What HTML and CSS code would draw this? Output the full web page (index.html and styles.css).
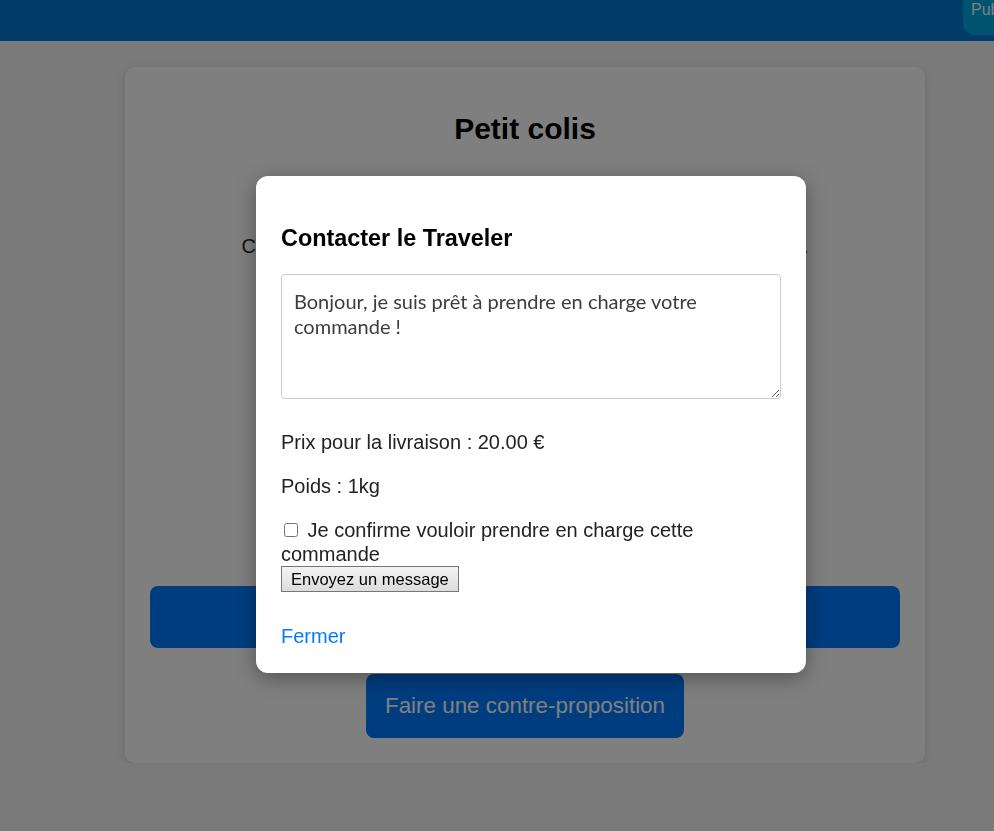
FILE: index.html
```html
<!DOCTYPE html>
<html lang="fr">
<head>
<meta charset="utf-8">
<title>Petit colis</title>
<link rel="stylesheet" href="styles.css">
</head>
<body>
<header class="topbar">
  <button class="publish">Publier</button>
</header>
<main class="page">
  <section class="card">
    <h2 class="card-title">Petit colis</h2>
    <p class="meta">Publié par Marie</p>
    <p class="summary"><span class="summary-text">Colis à récupérer à Paris et à livrer à Lyon avant le 25 juin.</span></p>
    <div class="details">
      <p>Départ : Paris</p>
      <p>Arrivée : Lyon</p>
      <p>Poids : 1kg</p>
      <p>Prix : 20.00 €</p>
      <p>Date : 25/06</p>
      <p>Taille : petite</p>
      <p>Statut : ouvert</p>
    </div>
    <button class="btn btn-wide">Accepter la commande</button>
    <button class="btn btn-counter">Faire une contre-proposition</button>
  </section>
</main>
<div class="overlay"></div>
<div class="modal">
  <h3 class="modal-title">Contacter le Traveler</h3>
  <textarea class="message">Bonjour, je suis prêt à prendre en charge votre commande !</textarea>
  <p class="info">Prix pour la livraison : 20.00 €</p>
  <p class="info">Poids : 1kg</p>
  <div class="confirm">
    <label class="confirm-label"><input type="checkbox" class="confirm-box"> Je confirme vouloir prendre en charge cette commande</label>
    <button class="send">Envoyez un message</button>
  </div>
  <a class="close" href="#">Fermer</a>
</div>
</body>
</html>
```
FILE: styles.css
```css
body {
  margin: 0;
  background: #f4f4f4;
  font-family: "Liberation Sans", Arial, sans-serif;
  font-size: 20px;
  color: #000;
  overflow: hidden;
}

.topbar {
  height: 41px;
  background: #0078d4;
  display: flex;
  justify-content: flex-end;
  align-items: flex-start;
}

.publish {
  width: 100px;
  margin: -11px -69px 0 0;
  padding: 12px 8px 16px;
  border: none;
  border-radius: 12px;
  background: #00a8e0;
  color: #fff;
  font-family: "Liberation Sans", Arial, sans-serif;
  font-size: 16px;
  line-height: 18px;
  text-align: left;
}

.page {
  padding: 26px 0 0 125px;
}

.card {
  width: 800px;
  box-sizing: border-box;
  padding: 45px 25px 25px;
  background: #fff;
  border-radius: 10px;
  box-shadow: 0 2px 10px rgba(0, 0, 0, 0.12);
  text-align: center;
  line-height: 23px;
}

.card-title {
  margin: 0 0 46px;
  font-size: 30px;
  line-height: 34px;
  font-weight: bold;
}

.meta {
  margin: 0;
  color: #555;
}

.summary {
  margin: 20px 0;
}

.summary-text {
  display: inline-block;
  width: 567px;
  text-align: justify;
  text-align-last: justify;
  color: #222;
}

.details {
  display: flex;
  flex-direction: column;
  gap: 20px;
  margin: 20px 0 27px;
}

.details p {
  margin: 0;
}

.btn {
  display: block;
  border: none;
  border-radius: 8px;
  background: #007bff;
  color: #fff;
  font-family: "Liberation Sans", Arial, sans-serif;
}

.btn-wide {
  width: 100%;
  height: 62px;
  font-size: 22px;
}

.btn-counter {
  margin: 26px auto 0;
  height: 64px;
  padding: 0 19px;
  font-size: 22.4px;
}

.overlay {
  position: fixed;
  inset: 0;
  background: rgba(0, 0, 0, 0.5);
}

.modal {
  position: absolute;
  top: 176px;
  left: 256px;
  width: 550px;
  box-sizing: border-box;
  padding: 25px;
  background: #fff;
  border-radius: 12px;
  box-shadow: 0 5px 20px rgba(0, 0, 0, 0.35);
  line-height: 24px;
  color: #222;
}

.modal-title {
  margin: 23px 0 22px;
  font-size: 23.4px;
  line-height: 28px;
  color: #000;
}

.message {
  display: block;
  width: 100%;
  height: 125px;
  box-sizing: border-box;
  margin: 0 0 31px;
  padding: 14px 12px 12px;
  border: 1px solid #ccc;
  border-radius: 4px;
  font-family: Lato, "Open Sans", sans-serif;
  font-size: 20px;
  line-height: 25px;
  color: #3c3c3c;
}

.info {
  margin: 20px 0;
}

.confirm {
  margin: 20px 0 32px;
}

.confirm-box {
  width: 14px;
  height: 14px;
  margin: 3px 4px 3px 3px;
}

.send {
  display: block;
  height: 26px;
  padding: 0 9px;
  border: 1px solid #767676;
  border-radius: 0;
  background: linear-gradient(#f3f3f3, #dcdcdc);
  color: #000;
  font-family: "Liberation Sans", Arial, sans-serif;
  font-size: 16.5px;
}

.close {
  display: block;
  color: #007bff;
  text-decoration: none;
  font-size: 20px;
}
```
